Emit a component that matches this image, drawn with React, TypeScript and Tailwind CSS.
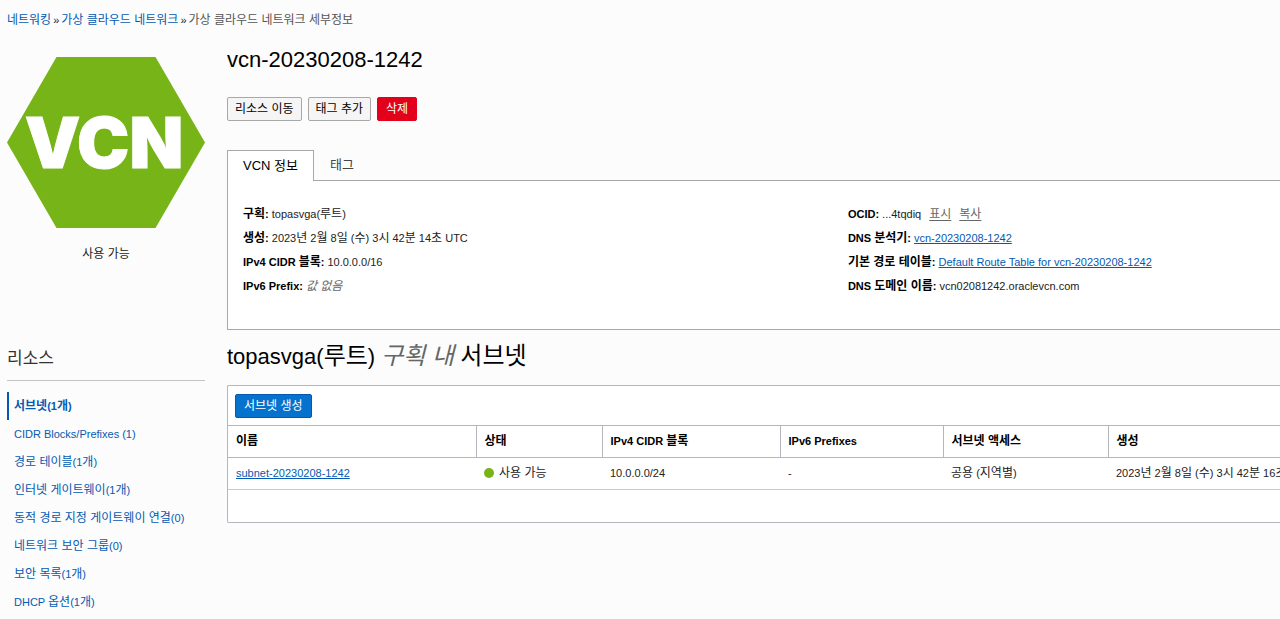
import type { ReactNode } from "react";

const LINK = "text-[#045ab3]";

/** Sets Hangul one step larger than the Latin text around it. */
function Ko({ text, className = "text-[12px]" }: { text: string; className?: string }) {
  const parts = text.split(/([가-힣]+(?: [가-힣]+)*)/);
  return (
    <>
      {parts.map((part, i) =>
        i % 2 === 1 ? (
          <span key={i} className={className}>
            {part}
          </span>
        ) : (
          part
        ),
      )}
    </>
  );
}

const resources = [
  "서브넷(1개)",
  "CIDR Blocks/Prefixes (1)",
  "경로 테이블(1개)",
  "인터넷 게이트웨이(1개)",
  "동적 경로 지정 게이트웨이 연결(0)",
  "네트워크 보안 그룹(0)",
  "보안 목록(1개)",
  "DHCP 옵션(1개)",
];

const columns = [
  { label: "이름", width: "w-[248px]" },
  { label: "상태", width: "w-[126px]" },
  { label: "IPv4 CIDR 블록", width: "w-[178px]" },
  { label: "IPv6 Prefixes", width: "w-[163px]" },
  { label: "서브넷 액세스", width: "w-[165px]" },
  { label: "생성", width: "" },
];

function Info({ label, children }: { label: string; children: ReactNode }) {
  return (
    <div className="flex h-6 items-baseline gap-[3px] whitespace-nowrap">
      <dt className="font-bold text-black">
        <Ko text={label} />
      </dt>
      <dd>{children}</dd>
    </div>
  );
}

function VcnBadge() {
  return (
    <svg viewBox="0 0 198 171" className="block w-full" role="img" aria-label="VCN">
      <polygon points="49.5,0 148.5,0 198,85.5 148.5,171 49.5,171 0,85.5" fill="#76b417" />
      <text
        x="97"
        y="111"
        textAnchor="middle"
        fill="#fff"
        stroke="#fff"
        strokeWidth="1"
        className="font-[Inter,sans-serif] text-[70px] font-black"
      >
        VCN
      </text>
    </svg>
  );
}

export default function App() {
  return (
    <div className="min-h-screen overflow-hidden bg-[#fcfcfc] pl-[7px] font-['Liberation_Sans','Noto_Sans_CJK_KR',sans-serif] text-[11px] leading-6 text-[#222]">
      <nav aria-label="breadcrumb" className="flex gap-[2px] pt-2 whitespace-nowrap">
        <a href="#networking" className={LINK}>
          <Ko text="네트워킹" />
        </a>
        <span>»</span>
        <a href="#vcns" className={LINK}>
          <Ko text="가상 클라우드 네트워크" />
        </a>
        <span>»</span>
        <span className="text-[#555]">
          <Ko text="가상 클라우드 네트워크 세부정보" />
        </span>
      </nav>

      <div className="flex gap-[22px]">
        <aside className="w-[198px] shrink-0 pt-[25px]">
          <VcnBadge />
          <p className="pt-[14px] text-center">
            <Ko text="사용 가능" />
          </p>
          <h2 className="mt-[77px] border-b border-[#c4c4c4] pb-[5px] text-[17px] leading-8 text-[#333]">
            리소스
          </h2>
          <ul className="pt-[11px] leading-7">
            {resources.map((item, i) => (
              <li
                key={item}
                className={
                  i === 0
                    ? "h-7 border-l-2 border-[#045ab3] pl-[5px] font-bold"
                    : "h-7 border-l-2 border-transparent pl-[5px]"
                }
              >
                <a href="#resource" className={`${LINK} whitespace-nowrap`}>
                  <Ko text={item} />
                </a>
              </li>
            ))}
          </ul>
        </aside>

        <main className="min-w-0 flex-1 pt-3">
          <h1 className="text-[22px] leading-8 text-black">vcn-20230208-1242</h1>

          <div className="flex gap-[6px] pt-[21px] text-[12px] leading-[22px]">
            <button type="button" className="h-6 rounded-[2px] border border-[#a8a8a8] bg-[#f5f5f5] px-[7px] text-black">
              리소스 이동
            </button>
            <button type="button" className="h-6 rounded-[2px] border border-[#a8a8a8] bg-[#f5f5f5] px-[7px] text-black">
              태그 추가
            </button>
            <button type="button" className="h-6 rounded-[2px] border border-[#e3001b] bg-[#e3001b] px-2 text-white">
              삭제
            </button>
          </div>

          <div role="tablist" className="flex pt-[29px] text-[13px]">
            <button
              type="button"
              role="tab"
              aria-selected="true"
              className="z-10 -mb-px h-[31px] border border-b-0 border-[#a8a8a8] bg-white px-[15px] text-black"
            >
              <Ko text="VCN 정보" className="text-[13px]" />
            </button>
            <button type="button" role="tab" aria-selected="false" className="h-[30px] px-4 text-[#444]">
              <Ko text="태그" className="text-[13px]" />
            </button>
          </div>

          <section className="grid min-h-[150px] grid-cols-[7fr_5fr] border-y border-l border-[#a8a8a8] bg-white pt-[21px] pl-[15px]">
            <dl>
              <Info label="구획:">
                <Ko text="topasvga(루트)" />
              </Info>
              <Info label="생성:">
                <Ko text="2023년 2월 8일 (수) 3시 42분 14초 UTC" />
              </Info>
              <Info label="IPv4 CIDR 블록:">10.0.0.0/16</Info>
              <Info label="IPv6 Prefix:">
                <em className="text-[12px] text-[#666]">값 없음</em>
              </Info>
            </dl>
            <dl>
              <Info label="OCID:">
                <span>...4tqdiq</span>
                <button type="button" className="ml-2 text-[12px] text-[#666] underline underline-offset-2">
                  표시
                </button>
                <button type="button" className="ml-2 text-[12px] text-[#666] underline underline-offset-2">
                  복사
                </button>
              </Info>
              <Info label="DNS 분석기:">
                <a href="#resolver" className={`${LINK} underline`}>
                  vcn-20230208-1242
                </a>
              </Info>
              <Info label="기본 경로 테이블:">
                <a href="#route-table" className={`${LINK} underline`}>
                  Default Route Table for vcn-20230208-1242
                </a>
              </Info>
              <Info label="DNS 도메인 이름:">vcn02081242.oraclevcn.com</Info>
            </dl>
          </section>

          <h2 className="pt-[10px] text-[22px] leading-8 whitespace-nowrap text-black">
            <Ko text="topasvga(루트) " className="text-[24px]" />
            <em className="text-[24px] text-[#666]">구획 내</em>{" "}
            <span className="text-[24px]">서브넷</span>
          </h2>

          <section className="mt-3 overflow-hidden rounded-l-[2px] border-y border-l border-[#b4b8be] bg-white pb-8">
            <div className="flex h-[39px] items-center pl-[7px]">
              <button
                type="button"
                className="h-6 rounded-[2px] border border-[#045ab3] bg-[#0572ce] px-2 text-[12px] leading-[22px] text-white"
              >
                서브넷 생성
              </button>
            </div>
            <table className="w-full table-fixed border-collapse text-left whitespace-nowrap">
              <thead>
                <tr className="h-8 border-y border-[#b4b8be] text-black">
                  {columns.map((column) => (
                    <th
                      key={column.label}
                      scope="col"
                      className={`${column.width} border-r border-[#b4b8be] py-0 pb-[2px] pl-2 font-bold last:border-r-0`}
                    >
                      <Ko text={column.label} />
                    </th>
                  ))}
                </tr>
              </thead>
              <tbody>
                <tr className="h-8 border-b border-[#c8ccd2]">
                  <td className="pb-[2px] pl-2">
                    <a href="#subnet" className={`${LINK} underline`}>
                      subnet-20230208-1242
                    </a>
                  </td>
                  <td className="pb-[2px] pl-2">
                    <span className="flex items-center gap-[5px]">
                      <span className="size-[10px] rounded-full bg-[#76b417]" />
                      <span className="text-[12px]">사용 가능</span>
                    </span>
                  </td>
                  <td className="pb-[2px] pl-2">10.0.0.0/24</td>
                  <td className="pb-[2px] pl-2">-</td>
                  <td className="pb-[2px] pl-2">
                    <Ko text="공용 (지역별)" />
                  </td>
                  <td className="pb-[2px] pl-2">
                    <Ko text="2023년 2월 8일 (수) 3시 42분 16초 UTC" />
                  </td>
                </tr>
              </tbody>
            </table>
          </section>
        </main>
      </div>
    </div>
  );
}
